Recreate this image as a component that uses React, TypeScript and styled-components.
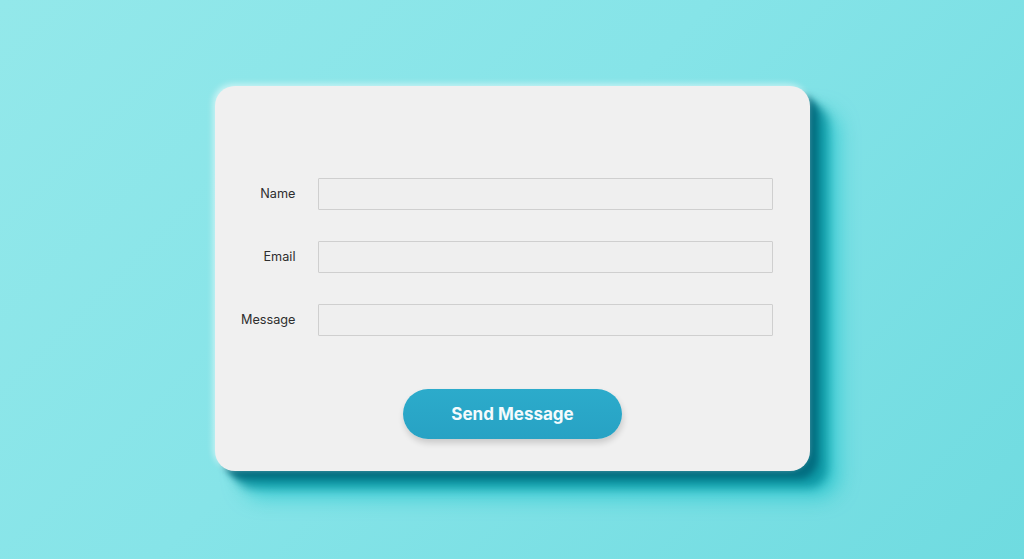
import styled, { createGlobalStyle } from "styled-components";

const GlobalStyle = createGlobalStyle`
  html, body, #root {
    margin: 0;
    height: 100%;
  }
  body {
    font-family: Inter, "Liberation Sans", sans-serif;
  }
`;

const fields = ["Name", "Email", "Message"];

const App = () => {
  return (
    <>
      <GlobalStyle />
      <Page>
        <Card>
          <Form onSubmit={(e) => e.preventDefault()}>
            {fields.map((field) => (
              <Row key={field}>
                <Label htmlFor={field}>{field}</Label>
                <Input id={field} type="text" />
              </Row>
            ))}
          </Form>
          <Actions>
            <SendButton type="button">Send Message</SendButton>
          </Actions>
        </Card>
      </Page>
    </>
  );
};

export default App;

const Page = styled.div`
  width: 100vw;
  height: 100vh;
  display: flex;
  align-items: center;
  justify-content: center;
  background: linear-gradient(135deg, #93e8ea 0%, #86e4e8 45%, #6fdbe0 100%);
  overflow: hidden;
`;

const Card = styled.div`
  box-sizing: border-box;
  width: 595px;
  height: 385px;
  margin-top: -3px;
  padding: 92px 37px 32px 20px;
  background: #f0f0f0;
  border-radius: 20px;
  display: flex;
  flex-direction: column;
  box-shadow: -2px -2px 6px rgba(255, 255, 255, 0.55),
    8px 8px 6px rgba(0, 100, 120, 0.8),
    18px 17px 10px rgba(0, 135, 150, 0.75),
    28px 26px 20px rgba(20, 190, 200, 0.65);
`;

const Form = styled.form`
  display: flex;
  flex-direction: column;
  gap: 31px;
`;

const Row = styled.div`
  display: grid;
  grid-template-columns: 61px 1fr;
  column-gap: 22px;
  align-items: center;
`;

const Label = styled.label`
  justify-self: end;
  font-size: 12.7px;
  color: #2e2e2e;
`;

const Input = styled.input`
  box-sizing: border-box;
  height: 32px;
  width: 100%;
  border: 1px solid #cfcfcf;
  border-radius: 1px;
  background: #efefef;
  outline: none;
`;

const Actions = styled.div`
  margin-top: auto;
  display: flex;
  justify-content: center;
  padding-left: 18px;
`;

const SendButton = styled.button`
  width: 219px;
  height: 50px;
  border: none;
  border-radius: 25px;
  background: linear-gradient(180deg, #2cabcb 0%, #27a2c4 100%);
  color: #f4fbfd;
  font-family: Inter, "Liberation Sans", sans-serif;
  font-size: 17px;
  font-weight: 700;
  cursor: pointer;
  box-shadow: 1px 4px 6px rgba(0, 0, 0, 0.16);
`;
